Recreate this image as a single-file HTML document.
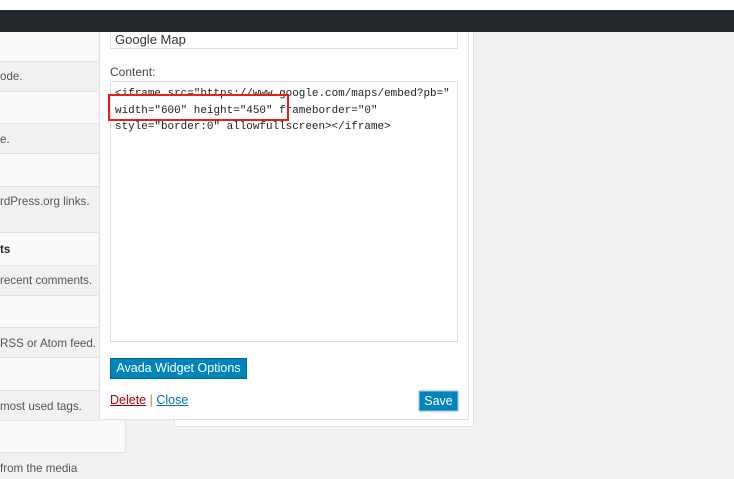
<!DOCTYPE html><html><head><style>
body{margin:0;width:734px;height:479px;background:#f1f1f1;position:relative;overflow:hidden;font-family:"Liberation Sans",sans-serif;font-size:12px;color:#444}
.a{position:absolute}
.row{position:absolute;left:0;width:98px;border-bottom:1px solid #e2e2e2}
.l{background:#fafafa}.g{background:#f1f1f1}
.t{position:absolute;left:0;white-space:nowrap;color:#555;font-size:11.6px}
.mono{font-family:"Liberation Mono",monospace;font-size:10.95px;color:#222;line-height:16.5px}
</style></head><body>
<div class="a" style="left:0;top:0;width:734px;height:10px;background:#fff"></div>
<div class="a" style="left:0;top:10px;width:734px;height:22px;background:#23282d"></div>
<div class="row l" style="top:32px;height:29px"></div>
<div class="row g" style="top:62px;height:29px"><span class="t" style="top:8px">ode.</span></div>
<div class="row l" style="top:92px;height:31px"></div>
<div class="row g" style="top:124px;height:29px"><span class="t" style="top:9px">e.</span></div>
<div class="row l" style="top:154px;height:32px"></div>
<div class="row g" style="top:187px;height:45px"><span class="t" style="top:8px">rdPress.org links.</span></div>
<div class="row l" style="top:233px;height:32px"><span class="t" style="top:10px;font-weight:bold;color:#23282d">ts</span></div>
<div class="row g" style="top:266px;height:29px"><span class="t" style="top:8px">recent comments.</span></div>
<div class="row l" style="top:296px;height:31px"></div>
<div class="row g" style="top:328px;height:29px"><span class="t" style="top:9px">RSS or Atom feed.</span></div>
<div class="row l" style="top:358px;height:32px"></div>
<div class="row g" style="top:391px;height:29px"><span class="t" style="top:9px">most used tags.</span></div>
<div class="row l" style="top:421px;height:31px;width:125px;border-right:1px solid #e2e2e2"></div>
<span class="t" style="top:462px">from the media</span>
<div class="a" style="left:174px;top:32px;width:298px;height:394px;background:#fff;border:1px solid #e2e2e2;border-top:none"></div>
<div class="a" style="left:99px;top:32px;width:368px;height:387px;background:#fff;border:1px solid #e2e2e2;border-top:none"></div>
<div class="a" style="left:110px;top:32px;width:346px;height:16px;border:1px solid #ddd;border-top:none;background:#fff"><span style="position:absolute;left:4px;top:0;font-size:13px;color:#333">Google Map</span></div>
<div class="a" style="left:110px;top:65px;color:#444">Content:</div>
<div class="a" style="left:110px;top:81px;width:346px;height:259px;border:1px solid #ddd;background:#fff">
<div class="mono" style="position:absolute;left:4px;top:4px;white-space:pre">&lt;iframe src="https://www.google.com/maps/embed?pb="
width="600" height="450" frameborder="0"
style="border:0" allowfullscreen&gt;&lt;/iframe&gt;</div></div>
<div class="a" style="left:108px;top:94px;width:177px;height:23px;border:2px solid #e8201a"></div>
<div class="a" style="left:110px;top:358px;width:135px;height:19px;background:#0085ba;border:1px solid #006799;color:#fff;font-size:12.5px;text-align:center;line-height:19px">Avada Widget Options</div>
<div class="a" style="left:110px;top:393px;font-size:12.5px"><span style="color:#a00;text-decoration:underline">Delete</span> <span style="color:#c80">|</span> <span style="color:#0073aa;text-decoration:underline">Close</span></div>
<div class="a" style="left:419px;top:391px;width:37px;height:18px;background:#0085ba;border:1px solid #5b9dd9;box-shadow:0 0 2px #5b9dd9;color:#fff;font-size:12.5px;text-align:center;line-height:18px">Save</div>
</body></html>
